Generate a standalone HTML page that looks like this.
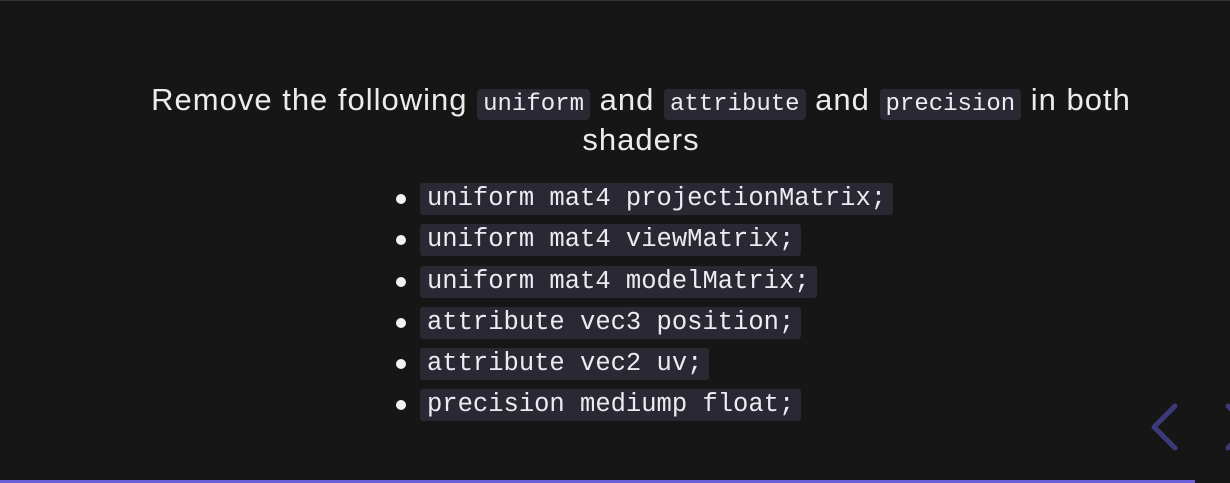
<!DOCTYPE html>
<html><head><style>
html,body{margin:0;padding:0;}
body{width:1230px;height:483px;background:#161616;position:relative;overflow:hidden;font-family:"Liberation Sans",sans-serif;color:#ececec;}
.h{position:absolute;left:26px;width:1230px;text-align:center;font-size:31px;line-height:40px;letter-spacing:1px;white-space:nowrap;}
code{font-family:"Liberation Mono",monospace;background:#2a2833;border-radius:4px;padding:2px 6px;font-size:24px;color:#ecebf2;letter-spacing:0;}
ul{position:absolute;left:392px;top:183px;margin:0;padding:0;list-style:none;}
li{height:41.3px;position:relative;}
li:before{content:"";position:absolute;left:4px;top:11px;width:10px;height:10px;border-radius:50%;background:#f2f2f2;}
li span{position:absolute;left:28px;top:0;height:32px;line-height:32px;padding:0 7px;background:#2a2833;border-radius:3px;font-family:"Liberation Mono",monospace;font-size:25.5px;color:#ecebf2;white-space:pre;}
</style></head><body>
<div style="position:absolute;left:0;top:0;width:1230px;height:1px;background:#333"></div>
<div class="h" style="top:80px">Remove the following <code>uniform</code> and <code>attribute</code> and <code>precision</code> in both</div>
<div class="h" style="top:120px">shaders</div>
<ul>
<li><span>uniform mat4 projectionMatrix;</span></li>
<li><span>uniform mat4 viewMatrix;</span></li>
<li><span>uniform mat4 modelMatrix;</span></li>
<li><span>attribute vec3 position;</span></li>
<li><span>attribute vec2 uv;</span></li>
<li><span>precision mediump float;</span></li>
</ul>
<svg style="position:absolute;left:1140px;top:398px" width="90" height="60">
<path d="M35 8 L14 29 L35 50" stroke="#3d3a7a" stroke-width="5" fill="none" stroke-linecap="round" stroke-linejoin="round"/>
<path d="M88 8 L95 15 M88 50 L95 43" stroke="#3d3a7a" stroke-width="5" fill="none" stroke-linecap="round"/>
</svg>
<div style="position:absolute;left:0;top:480px;width:1195px;height:3px;background:#6a5fd8"></div>
</body></html>
